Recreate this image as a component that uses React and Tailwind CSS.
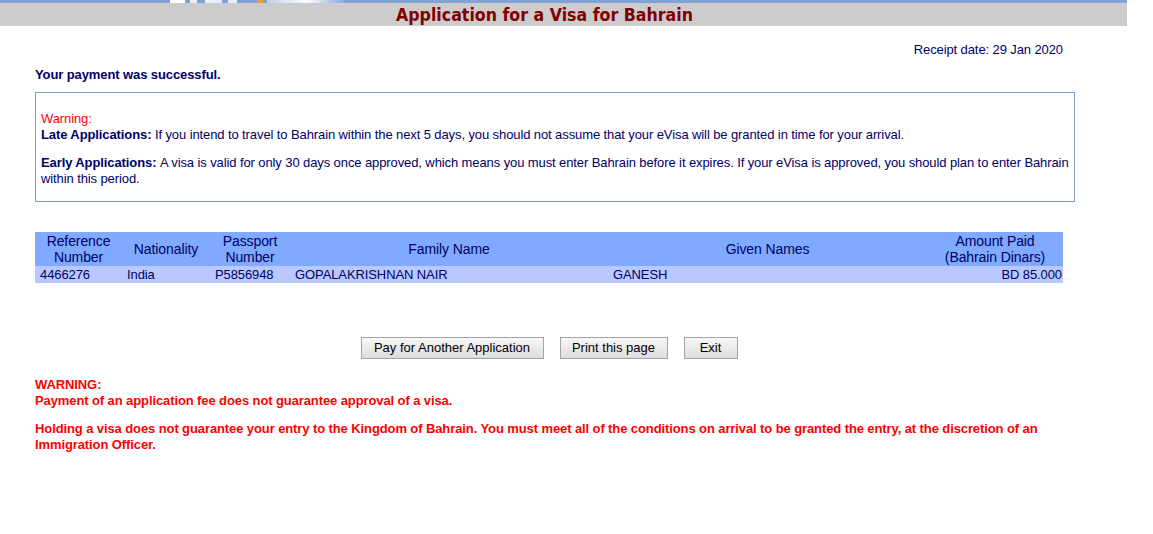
import React from 'react';

const columns = [
  { head: ['Reference', 'Number'], value: '4466276', align: 'left' },
  { head: ['Nationality'], value: 'India', align: 'left' },
  { head: ['Passport', 'Number'], value: 'P5856948', align: 'left' },
  { head: ['Family Name'], value: 'GOPALAKRISHNAN NAIR', align: 'left' },
  { head: ['Given Names'], value: 'GANESH', align: 'left' },
  { head: ['Amount Paid', '(Bahrain Dinars)'], value: 'BD 85.000', align: 'right' },
];

const Button = ({ children, width }) => (
  <button
    className={`${width} h-[22px] border border-[#a3a3a3] bg-gradient-to-b from-[#f7f7f7] to-[#dddddd] text-[13px] leading-[20px] text-black`}
  >
    {children}
  </button>
);

export default function App() {
  return (
    <div className="w-[1127px] bg-white font-['Liberation_Sans',Arial,sans-serif] text-[13px] leading-[16px] tracking-[-0.1px] text-[#000066]">
      {/* banner strip (cut-off logo image) */}
      <div className="flex h-[3px] bg-[#82a2d4]">
        <div className="w-[170px]" />
        <div className="w-[15px] bg-white" />
        <div className="w-[5px]" />
        <div className="w-[7px] bg-[#e8eef8]" />
        <div className="w-[8px]" />
        <div className="w-[17px] bg-[#e8eef8]" />
        <div className="w-[6px]" />
        <div className="w-[9px] bg-[#e8eef8]" />
        <div className="w-[20px]" />
        <div className="w-[6px] bg-[#f0a030]" />
        <div className="w-[4px]" />
        <div className="w-[80px] bg-gradient-to-r from-[#c0d0ea] via-white to-[#82a2d4]" />
      </div>

      <div className="flex h-[23px] items-center justify-center bg-[#cccccc] pr-[38px]">
        <h1 className="font-['DejaVu_Sans_Condensed','DejaVu_Sans',sans-serif] text-[17.6px] font-bold leading-[20px] tracking-normal text-[#800000]">
          Application for a Visa for Bahrain
        </h1>
      </div>

      <div className="ml-[35px] w-[1040px]">
        <p className="mt-[16px] pr-[12px] text-right">Receipt date: 29 Jan 2020</p>
        <p className="mt-[9px] font-bold">Your payment was successful.</p>

        <div className="mt-[9px] border border-[#7f9fd0] px-[5px] pt-[18px] pb-[14px]">
          <p>
            <span className="text-[#ff0000]">Warning:</span>
            <br />
            <b>Late Applications:</b> If you intend to travel to Bahrain within the next 5 days, you should not assume that your eVisa will be granted in time for your arrival.
          </p>
          <p className="mt-[12px]">
            <b>Early Applications: </b>A visa is valid for only 30 days once approved, which means you must enter Bahrain before it expires. If your eVisa is approved, you should plan to enter Bahrain within this period.
          </p>
        </div>

        <div className="mt-[30px] grid w-[1028px] grid-cols-[87px_88px_80px_318px_319px_136px]">
          {columns.map((c) => (
            <div key={c.value} className="flex h-[34px] flex-col items-center justify-center bg-[#7faaff] text-[14px] leading-[16px]">
              {c.head.map((h) => (
                <span key={h}>{h}</span>
              ))}
            </div>
          ))}
          {columns.map((c) => (
            <div
              key={c.value + '-v'}
              className={`h-[17px] bg-[#b9c9ff] leading-[17px] ${c.align === 'right' ? 'pr-[1px] text-right' : 'pl-[5px]'}`}
            >
              {c.value}
            </div>
          ))}
        </div>

        <div className="mt-[54px] flex w-[1028px] justify-center gap-[16px] tracking-normal">
          <Button width="w-[183px]">Pay for Another Application</Button>
          <Button width="w-[108px]">Print this page</Button>
          <Button width="w-[54px]">Exit</Button>
        </div>

        <div className="mt-[18px] font-bold text-[#ff0000]">
          <p>
            WARNING:
            <br />
            Payment of an application fee does not guarantee approval of a visa.
          </p>
          <p className="mt-[12px]">
            Holding a visa does not guarantee your entry to the Kingdom of Bahrain. You must meet all of the conditions on arrival to be granted the entry, at the discretion of an Immigration Officer.
          </p>
        </div>
      </div>
    </div>
  );
}
